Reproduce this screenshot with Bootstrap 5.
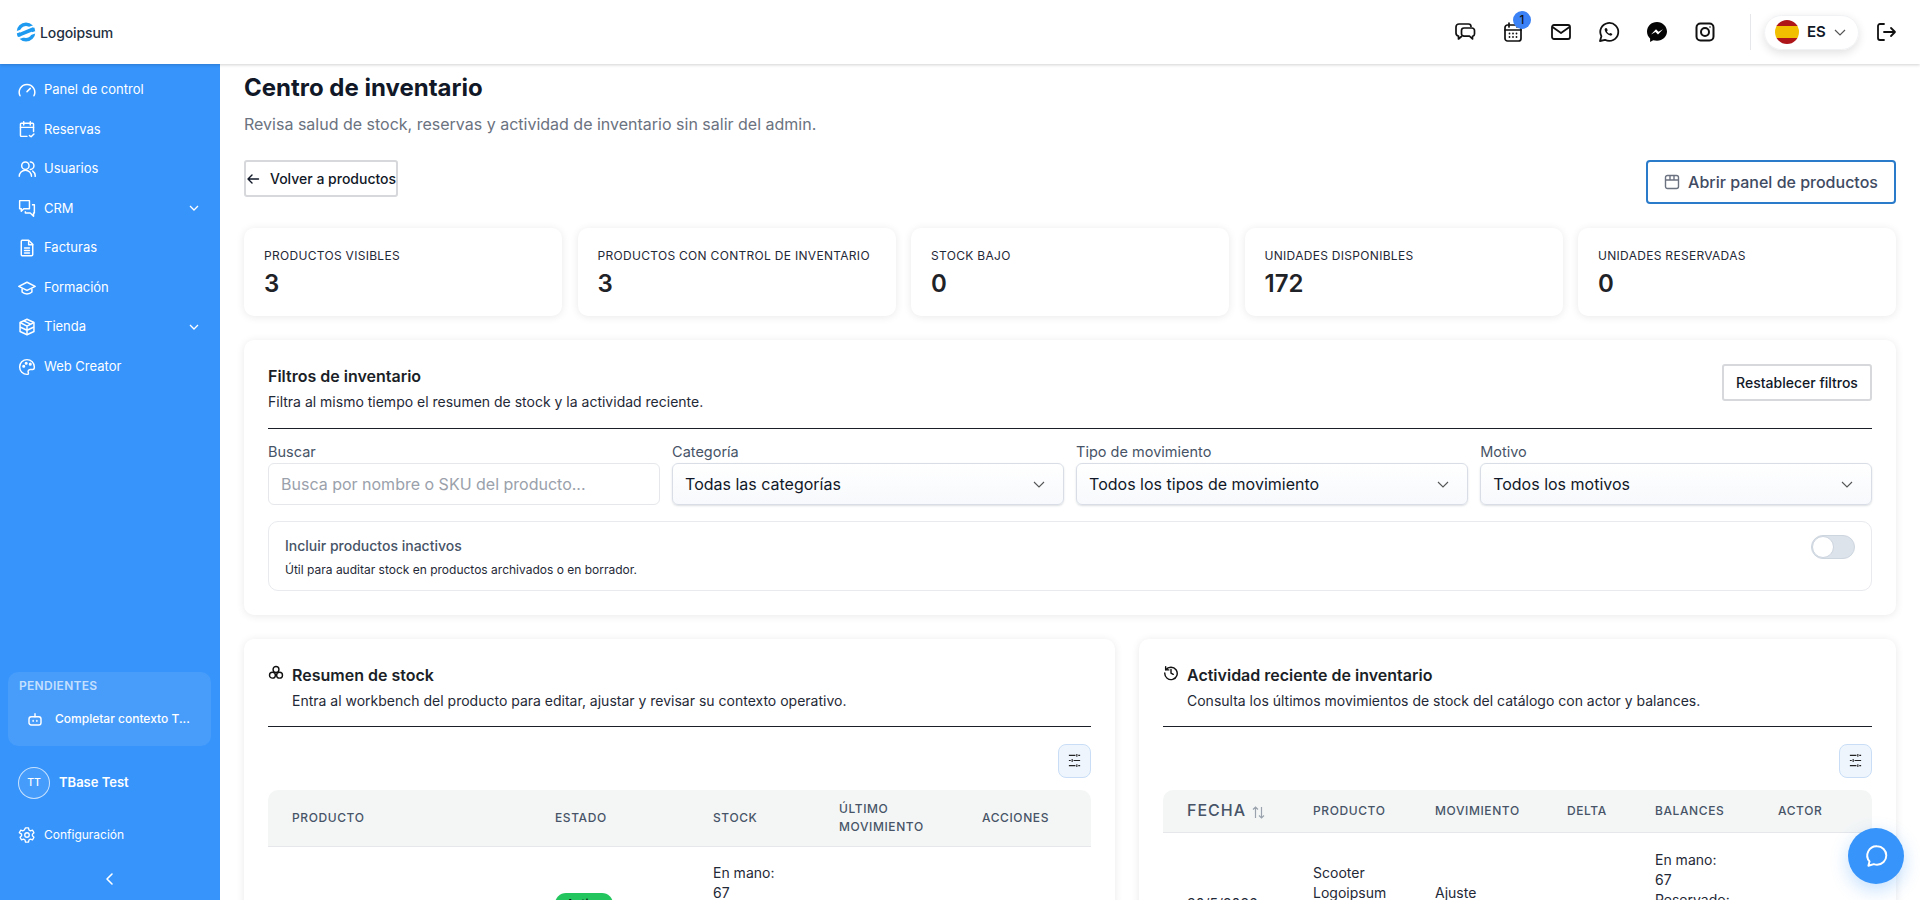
<!DOCTYPE html>
<html lang="es">
<head>
<meta charset="utf-8">
<title>Centro de inventario</title>
<link rel="stylesheet" href="https://cdn.jsdelivr.net/npm/bootstrap@5.3.0/dist/css/bootstrap.min.css">
<style>
html,body{height:100%;overflow:hidden}
body{font-family:Inter,"Liberation Sans",sans-serif;background:#fff;color:#111827}
.app-top{height:64px;background:#fff;box-shadow:0 1px 3px rgba(0,0,0,.18);position:relative;z-index:3;padding:0 22px 0 16px}
.logo-word{font-size:14px;font-weight:500;color:#1f2f3f;letter-spacing:-.1px}
.top-ico{width:24px;height:24px;color:#111;flex:none}
.top-gap{gap:24px}
.cal-badge{position:absolute;top:-9px;left:12px;width:18px;height:18px;border-radius:50%;background:#3b82f6;color:#111;font-size:11.5px;line-height:18px;text-align:center;font-weight:500}
.top-sep{width:1px;height:36px;background:#e5e7eb;margin:0 13px 0 33px}
.lang-pill{height:35px;width:95px;border-radius:18px;box-shadow:0 3px 10px rgba(0,0,0,.12);border:1px solid #f1f2f4;padding:0 12px 0 10px;gap:8px;font-size:15px;font-weight:600}
.flag-dot{width:24px;height:24px;border-radius:50%;background:linear-gradient(#ad1519 0 25%,#f1bf00 25% 75%,#ad1519 75%);flex:none}
.logout-ico{margin-left:15px}
.app-body{height:836px}
.side{width:220px;background:#3694fb;color:#fff;flex:none}
.side-link{height:39.57px;padding:0 20px 0 18px;font-size:13px;gap:8px;color:#fff}
.side-link svg.mi{width:18px;height:18px;flex:none}
.side-nav{padding-top:6px}
.pend-box{margin:0 9px 0 8px;background:rgba(255,255,255,.09);border-radius:10px;height:74px;padding:5px 11px}
.pend-title{font-size:12px;font-weight:600;color:rgba(255,255,255,.7);letter-spacing:.3px}
.pend-item{font-size:12px;font-weight:500;gap:11px;padding:15px 0 0 7px;line-height:18px}
.user-row{padding:0 18px;gap:9px;font-size:13px;font-weight:600;margin-top:21px}
.user-av{width:32px;height:32px;border-radius:50%;border:1px solid rgba(255,255,255,.7);font-size:10.5px;font-weight:500;line-height:30px;text-align:center;background:rgba(255,255,255,.08)}
.cfg-row{padding:0 18px;gap:8px;font-size:12px;margin-top:27px;height:18px}
.side-foot{margin-top:28px;padding-bottom:14px}
.side-foot svg{display:block;margin:0 auto}
.main-pane{flex:1;min-width:0;padding:0 24px;overflow:hidden}
.page-h{font-size:24px;font-weight:700;color:#111827;line-height:32px;margin:8px 0 0}
.page-sub{font-size:16px;color:#6b7280;line-height:24px;margin:8px 0 0}
.act-row{margin-top:24px;height:44px}
.back-btn{height:37px;width:154px;border:2px solid #d6d8db;border-radius:3px;background:#fff;font-size:14px;font-weight:500;color:#111827;padding:0;gap:10px;white-space:nowrap}
.back-btn svg{flex:none}
.open-btn{height:44px;width:250px;border:2px solid #2b7bcb;border-radius:4px;background:#fff;font-size:16px;font-weight:500;color:#3f4b63;gap:8px;padding:0}
.stat-row{display:grid;grid-template-columns:repeat(5,1fr);gap:15.5px;margin-top:24px}
.stat-box{height:88px;background:#fff;border-radius:10px;box-shadow:0 1px 8px rgba(0,0,0,.09);padding:20px}
.stat-lbl{font-size:12px;letter-spacing:.3px;color:#1f2937;line-height:16px}
.stat-num{font-size:24px;font-weight:600;color:#1f2328;line-height:30px;margin-top:5px}
.panel-box{background:#fff;border-radius:10px;box-shadow:0 1px 8px rgba(0,0,0,.09);padding:24px}
.filter-box{height:275px;margin-top:24px}
.filter-head{height:44px}
.panel-h{font-size:16px;font-weight:600;color:#1b1f27;line-height:24px}
.panel-sub{font-size:14px;color:#1f2937;line-height:20px;margin-top:4px}
.rule{height:1px;background:#1b1f27}
.rule-f{margin-top:20px}
.rule-l{margin-top:15px}
.reset-btn{height:37px;width:150px;border:2px solid #d6d8db;border-radius:3px;background:#fff;font-size:14px;font-weight:500;color:#111827;padding:0}
.filter-grid{display:grid;grid-template-columns:repeat(4,1fr);gap:12.2px;margin-top:14px}
.f-lbl{font-size:14.5px;color:#475467;line-height:18px;margin-bottom:2px}
.f-in{height:42px;border:1px solid #dfe3e8;border-radius:6px;padding:0 12px;font-size:16px;color:#111827;display:flex;align-items:center;justify-content:space-between;background:#fff}
.f-in svg{margin-right:6px;flex:none}
.f-in.ph{color:#9aa1ab;border-color:#e5e7eb}
.f-in.sel{background:linear-gradient(#fff,#f7f9fc);box-shadow:0 1px 2px rgba(60,70,90,.18);border-color:#d9dee6}
.tog-box{height:70px;margin-top:16px;border:1px solid #e8eaee;border-radius:10px;padding:13px 16px 0 16px}
.tog-t{font-size:14px;font-weight:500;color:#475467;line-height:20px;margin-top:1px}
.tog-s{font-size:12px;color:#1f2937;line-height:18px;margin-top:5px}
.tog-sw{width:44px;height:24px;border-radius:12px;background:#dde3ea;border:1px solid #cdd5df;position:relative}
.tog-sw::before{content:"";position:absolute;left:0;top:0;width:22px;height:22px;border-radius:50%;background:#fff;border:1px solid #cdd5df}
.lower-grid{display:grid;grid-template-columns:871px 757px;gap:24px;margin-top:24px}
.lower-box{height:320px;overflow:hidden}
.head-ico{width:16px;height:16px;flex:none;margin-top:2px}
.tune-row{margin-top:16.5px}
.tune-btn{width:33px;height:34px;border-radius:8px;background:#eef5fd;border:1px solid #c9def6;padding:0;display:flex;align-items:center;justify-content:center}
.tb-wrap{margin-top:12px}
.inv-t{width:100%;table-layout:fixed;border-collapse:separate;border-spacing:0}
.inv-t th{background:#f4f6f6;font-size:12px;font-weight:500;letter-spacing:.6px;color:#475467;text-transform:uppercase;border-bottom:1px solid #e5e7eb;padding:0 0 0 24px;line-height:18px;vertical-align:middle}
.inv-t th:first-child{border-top-left-radius:10px}
.inv-t th:last-child{border-top-right-radius:10px}
.inv-t td{font-size:14px;line-height:20px;color:#1f2937;vertical-align:top;padding:16px 0 0 24px}
.inv-stock col:nth-child(1){width:263px}
.inv-stock col:nth-child(2){width:158px}
.inv-stock col:nth-child(3){width:126px}
.inv-stock col:nth-child(4){width:143px}
.inv-stock thead tr{height:57px}
.inv-act col:nth-child(1){width:126px}
.inv-act col:nth-child(2){width:122px}
.inv-act col:nth-child(3){width:132px}
.inv-act col:nth-child(4){width:88px}
.inv-act col:nth-child(5){width:123px}
.inv-act thead tr{height:43px}
.inv-t th.th-fecha{font-size:16px;letter-spacing:1px}
.inv-t td.td-tag{padding-top:46px}
.inv-t td.td-date{padding-top:61px}
.inv-t td.td-prod{padding-top:30px}
.inv-t td.td-mov{padding-top:50px}
.inv-t td.td-bal{padding-top:17px}
.fab-chat{position:absolute;right:16px;bottom:16px;width:56px;height:56px;border-radius:50%;background:#3694fb;box-shadow:0 6px 18px rgba(54,148,251,.3);z-index:5}
.act-tag{display:inline-block;background:#22c55e;color:#111;font-size:12px;font-weight:500;border-radius:11px;padding:1px 11px;line-height:20px}
</style>
</head>
<body>
<header class="app-top d-flex align-items-center">
  <div class="d-flex align-items-center gap-1">
    <svg width="20" height="20" viewBox="0 0 20 20"><circle cx="10" cy="10" r="7.700" fill="none" stroke="#1e9bf0" stroke-width="3.400"/><path d="M0 10.500L20 3.500M0 17L20 10" stroke="#fff" stroke-width="2.200"/><path d="M2.500 13.200L17.500 7" stroke="#1e9bf0" stroke-width="3.600"/></svg>
    <span class="logo-word">Logoipsum</span>
  </div>
  <div class="ms-auto d-flex align-items-center top-gap">
    <svg class="top-ico" viewBox="0 0 24 24" fill="none" stroke="currentColor" stroke-width="1.700" stroke-linejoin="round"><path d="M18 7V6.500A2.500 2.500 0 0 0 15.500 4H6a3 3 0 0 0-3 3v6a3 3 0 0 0 2.500 3v3l3.500-3"/><path d="M11 8h8a2.500 2.500 0 0 1 2.500 2.500v3.500a2.500 2.500 0 0 1-2 2.400V19l-3-2.800H11A2.500 2.500 0 0 1 8.500 13.700v-3.200A2.500 2.500 0 0 1 11 8z"/></svg>
    <span class="position-relative d-block top-ico">
      <svg class="top-ico d-block" viewBox="0 0 24 24" fill="none" stroke="currentColor" stroke-width="1.700" stroke-linecap="round"><rect x="4" y="5" width="16" height="16" rx="2.500"/><path d="M8 3v4M16 3v4M4 10h16"/><path d="M8.500 13.500h.01M12 13.500h.01M15.500 13.500h.01M8.500 17h.01M12 17h.01M15.500 17h.01" stroke-width="1.800"/></svg>
      <span class="cal-badge">1</span>
    </span>
    <svg class="top-ico" viewBox="0 0 24 24" fill="none" stroke="currentColor" stroke-width="1.800" stroke-linejoin="round"><rect x="3" y="5" width="18" height="14" rx="2"/><path d="M3.500 7l8.500 6 8.500-6"/></svg>
    <svg class="top-ico" viewBox="0 0 24 24" fill="none" stroke="currentColor" stroke-width="1.800" stroke-linejoin="round"><path d="M3 21l1.400-4.800A9 9 0 1 1 8 19.800z"/><path d="M9 8c-1 0-1.500 1-1.300 2 .6 2.700 3 5 5.500 5.600 1 .2 2.100-.4 2.100-1.400 0-.5-1.700-1.400-2.200-1.200l-.9.700c-1-.5-1.800-1.300-2.300-2.300l.7-.9C10.800 10 10 8 9 8z" fill="currentColor" stroke="none"/></svg>
    <svg class="top-ico" viewBox="0 0 24 24"><path d="M12 2C6.300 2 2 6.200 2 11.600c0 2.900 1.200 5.300 3.100 7V22l3.100-1.700c1.200.3 2.500.5 3.800.5 5.700 0 10-4.200 10-9.200S17.700 2 12 2z" fill="#050505"/><path d="M6 14.500l5-5.300 2.500 2.600L18 9.200l-5 5.300-2.500-2.600z" fill="#fff"/></svg>
    <svg class="top-ico" viewBox="0 0 24 24" fill="none" stroke="currentColor" stroke-width="2"><rect x="3.500" y="3.500" width="17" height="17" rx="4"/><circle cx="12" cy="12" r="4"/><circle cx="17" cy="7" r=".8" fill="currentColor" stroke="none"/></svg>
  </div>
  <span class="top-sep"></span>
  <div class="lang-pill d-flex align-items-center">
    <span class="flag-dot"></span><span>ES</span>
    <svg class="ms-auto" width="12" height="12" viewBox="0 0 12 12" fill="none" stroke="#555" stroke-width="1.200"><path d="M1 4l5 5 5-5"/></svg>
  </div>
  <svg class="top-ico logout-ico" viewBox="0 0 24 24" fill="none" stroke="currentColor" stroke-width="1.800" stroke-linecap="round" stroke-linejoin="round"><path d="M10 4H6a2 2 0 0 0-2 2v12a2 2 0 0 0 2 2h4M10 12h11M17 8l4 4-4 4"/></svg>
</header>
<div class="app-body d-flex">
  <aside class="side d-flex flex-column">
    <nav class="side-nav">
      <div class="side-link d-flex align-items-center"><svg class="mi" viewBox="1 1 22 22" fill="none" stroke="#fff" stroke-width="1.800" stroke-linecap="round"><path d="M3.500 19a9.500 9.500 0 1 1 17 0"/><path d="M12 14l4-4"/></svg>Panel de control</div>
      <div class="side-link d-flex align-items-center"><svg class="mi" viewBox="1 1 22 22" fill="none" stroke="#fff" stroke-width="1.800" stroke-linecap="round" stroke-linejoin="round"><path d="M12 21H5a1 1 0 0 1-1-1V6a1 1 0 0 1 1-1h14a1 1 0 0 1 1 1v9"/><path d="M4 10h16M8 3v4M16 3v4M15 20l2 1.500 3.500-3.500"/></svg>Reservas</div>
      <div class="side-link d-flex align-items-center"><svg class="mi" viewBox="1 1 22 22" fill="none" stroke="#fff" stroke-width="1.800" stroke-linecap="round"><circle cx="10" cy="8" r="4.500"/><path d="M2.500 21a7.500 7.500 0 0 1 15 0M16 3.500a4.500 4.500 0 0 1 0 9M19 14.500a7 7 0 0 1 3 6.500"/></svg>Usuarios</div>
      <div class="side-link d-flex align-items-center"><svg class="mi" viewBox="1 1 22 22" fill="none" stroke="#fff" stroke-width="1.800" stroke-linejoin="round"><path d="M3 3h12v10H8l-3 3v-3H3z"/><path d="M18 8h3v10h-1v4l-4-4H10v-2"/></svg>CRM<svg class="ms-auto" width="12" height="12" viewBox="0 0 12 12" fill="none" stroke="#fff" stroke-width="1.300"><path d="M2 4l4 4 4-4"/></svg></div>
      <div class="side-link d-flex align-items-center"><svg class="mi" viewBox="1 1 22 22" fill="none" stroke="#fff" stroke-width="1.800" stroke-linejoin="round" stroke-linecap="round"><path d="M6 2.500h8l5 5V20a1.500 1.500 0 0 1-1.500 1.500h-11.500A1.500 1.500 0 0 1 5 20V4A1.500 1.500 0 0 1 6 2.500z"/><path d="M14 3v5h5M9 12h6M9 15h6M9 18h6"/></svg>Facturas</div>
      <div class="side-link d-flex align-items-center"><svg class="mi" viewBox="1 1 22 22" fill="none" stroke="#fff" stroke-width="1.800" stroke-linejoin="round"><path d="M12 5L2 10l10 5 10-5z"/><path d="M6 12.500V17c3 3 9 3 12 0v-4.500"/></svg>Formación</div>
      <div class="side-link d-flex align-items-center"><svg class="mi" viewBox="1 1 22 22" fill="none" stroke="#fff" stroke-width="1.800" stroke-linejoin="round"><path d="M12 2.500l8.500 4v11L12 21.500 3.500 17.500v-11z"/><path d="M3.500 6.500L12 11l8.500-4.500M12 11v10.500M3.500 12l8.500 4 8.500-4M8 4.500l8.500 4"/></svg>Tienda<svg class="ms-auto" width="12" height="12" viewBox="0 0 12 12" fill="none" stroke="#fff" stroke-width="1.300"><path d="M2 4l4 4 4-4"/></svg></div>
      <div class="side-link d-flex align-items-center"><svg class="mi" viewBox="1 1 22 22" fill="none" stroke="#fff" stroke-width="1.800"><path d="M12 3a9 9 0 1 0 0 18c2 0 2-1.500 1.500-2.500S13.500 15 16 15h3c1.500 0 2-1.500 2-3a9 9 0 0 0-9-9z"/><circle cx="8" cy="11" r="1" fill="#fff"/><circle cx="11" cy="7.500" r="1" fill="#fff"/><circle cx="16" cy="8.500" r="1" fill="#fff"/></svg>Web Creator</div>
    </nav>
    <div class="mt-auto">
      <div class="pend-box">
        <div class="pend-title">PENDIENTES</div>
        <div class="pend-item d-flex align-items-center"><svg width="18" height="18" viewBox="0 0 24 24" fill="none" stroke="#fff" stroke-width="1.900" stroke-linecap="round"><rect x="4" y="9" width="16" height="11" rx="3"/><path d="M12 5v4M9.500 14v1M14.500 14v1"/></svg><span class="text-truncate">Completar contexto T...</span></div>
      </div>
      <div class="user-row d-flex align-items-center"><span class="user-av">TT</span><span>TBase Test</span></div>
      <div class="cfg-row d-flex align-items-center"><svg width="18" height="18" viewBox="0 0 24 24" fill="none" stroke="#fff" stroke-width="1.800" stroke-linejoin="round"><circle cx="12" cy="12" r="3"/><path d="M10 2.500h4l.6 2.800 2 1.100 2.700-.9 2 3.500-2.100 1.900v2.200l2.100 1.900-2 3.500-2.700-.9-2 1.100-.6 2.800h-4l-.6-2.800-2-1.100-2.700.9-2-3.500 2.100-1.900v-2.200L1.700 9l2-3.500 2.700.9 2-1.100z"/></svg>Configuración</div>
      <div class="side-foot"><svg width="14" height="14" viewBox="0 0 14 14" fill="none" stroke="#fff" stroke-width="1.600" stroke-linecap="round" stroke-linejoin="round"><path d="M9 2L4 7l5 5"/></svg></div>
    </div>
  </aside>
  <main class="main-pane">
    <h1 class="page-h">Centro de inventario</h1>
    <p class="page-sub">Revisa salud de stock, reservas y actividad de inventario sin salir del admin.</p>
    <div class="act-row d-flex justify-content-between align-items-start">
      <button class="back-btn d-flex align-items-center" type="button"><svg width="14" height="14" viewBox="0 0 14 14" fill="none" stroke="#111827" stroke-width="1.400" stroke-linecap="round" stroke-linejoin="round"><path d="M12.500 7H2M6 3L2 7l4 4"/></svg>Volver a productos</button>
      <button class="open-btn d-flex align-items-center justify-content-center" type="button"><svg width="16" height="16" viewBox="0 0 16 16" fill="none" stroke="#6b7280" stroke-width="1.400" stroke-linejoin="round"><rect x="1.500" y="1.500" width="13" height="13" rx="2"/><path d="M1.500 6h13M6 1.500V6M10 1.500V6"/></svg>Abrir panel de productos</button>
    </div>
    <div class="stat-row">
      <div class="stat-box"><div class="stat-lbl">PRODUCTOS VISIBLES</div><div class="stat-num">3</div></div>
      <div class="stat-box"><div class="stat-lbl">PRODUCTOS CON CONTROL DE INVENTARIO</div><div class="stat-num">3</div></div>
      <div class="stat-box"><div class="stat-lbl">STOCK BAJO</div><div class="stat-num">0</div></div>
      <div class="stat-box"><div class="stat-lbl">UNIDADES DISPONIBLES</div><div class="stat-num">172</div></div>
      <div class="stat-box"><div class="stat-lbl">UNIDADES RESERVADAS</div><div class="stat-num">0</div></div>
    </div>
    <section class="panel-box filter-box">
      <div class="filter-head d-flex justify-content-between align-items-start">
        <div><div class="panel-h">Filtros de inventario</div><div class="panel-sub">Filtra al mismo tiempo el resumen de stock y la actividad reciente.</div></div>
        <button class="reset-btn" type="button">Restablecer filtros</button>
      </div>
      <div class="rule rule-f"></div>
      <div class="filter-grid">
        <div><div class="f-lbl">Buscar</div><div class="f-in ph">Busca por nombre o SKU del producto...</div></div>
        <div><div class="f-lbl">Categoría</div><div class="f-in sel">Todas las categorías<svg width="12" height="12" viewBox="0 0 12 12" fill="none" stroke="#555" stroke-width="1.100"><path d="M1 4l5 5 5-5"/></svg></div></div>
        <div><div class="f-lbl">Tipo de movimiento</div><div class="f-in sel">Todos los tipos de movimiento<svg width="12" height="12" viewBox="0 0 12 12" fill="none" stroke="#555" stroke-width="1.100"><path d="M1 4l5 5 5-5"/></svg></div></div>
        <div><div class="f-lbl">Motivo</div><div class="f-in sel">Todos los motivos<svg width="12" height="12" viewBox="0 0 12 12" fill="none" stroke="#555" stroke-width="1.100"><path d="M1 4l5 5 5-5"/></svg></div></div>
      </div>
      <div class="tog-box d-flex justify-content-between align-items-start">
        <div><div class="tog-t">Incluir productos inactivos</div><div class="tog-s">Útil para auditar stock en productos archivados o en borrador.</div></div>
        <span class="tog-sw"></span>
      </div>
    </section>
    <div class="lower-grid">
      <section class="panel-box lower-box">
        <div class="d-flex gap-2"><svg class="head-ico" viewBox="0 0 18 18" fill="none" stroke="#111" stroke-width="1.600"><circle cx="9" cy="5" r="3.300"/><circle cx="5" cy="11.500" r="3.300"/><circle cx="13" cy="11.500" r="3.300"/></svg><div><div class="panel-h">Resumen de stock</div><div class="panel-sub">Entra al workbench del producto para editar, ajustar y revisar su contexto operativo.</div></div></div>
        <div class="rule rule-l"></div>
        <div class="d-flex justify-content-end tune-row"><button class="tune-btn" type="button" aria-label="Columnas"><svg width="15" height="15" viewBox="0 0 16 16" fill="none" stroke="#222" stroke-width="1.200"><path d="M2 2.500h7M12 2.500h2M10.500 1v3M2 8h2M7 8h7M5.500 6.500v3M2 13.500h7M12 13.500h2M10.500 12v3"/></svg></button></div>
        <div class="tb-wrap">
          <table class="inv-t inv-stock">
            <colgroup><col><col><col><col><col></colgroup>
            <thead><tr><th>Producto</th><th>Estado</th><th>Stock</th><th>Último movimiento</th><th>Acciones</th></tr></thead>
            <tbody><tr><td></td><td class="td-tag"><span class="act-tag">Activo</span></td><td>En mano:<br>67</td><td></td><td></td></tr></tbody>
          </table>
        </div>
      </section>
      <section class="panel-box lower-box">
        <div class="d-flex gap-2"><svg class="head-ico" viewBox="0 0 18 18" fill="none" stroke="#111" stroke-width="1.600" stroke-linecap="round"><path d="M3 2v3.500h3.500M3.200 5.500A7 7 0 1 1 2 9M9 5V9l2.500 1.500"/></svg><div><div class="panel-h">Actividad reciente de inventario</div><div class="panel-sub">Consulta los últimos movimientos de stock del catálogo con actor y balances.</div></div></div>
        <div class="rule rule-l"></div>
        <div class="d-flex justify-content-end tune-row"><button class="tune-btn" type="button" aria-label="Columnas"><svg width="15" height="15" viewBox="0 0 16 16" fill="none" stroke="#222" stroke-width="1.200"><path d="M2 2.500h7M12 2.500h2M10.500 1v3M2 8h2M7 8h7M5.500 6.500v3M2 13.500h7M12 13.500h2M10.500 12v3"/></svg></button></div>
        <div class="tb-wrap">
          <table class="inv-t inv-act">
            <colgroup><col><col><col><col><col><col></colgroup>
            <thead><tr><th class="th-fecha">Fecha <svg width="15" height="15" viewBox="0 0 15 15" fill="none" stroke="#9aa3ad" stroke-width="1.200"><path d="M4.500 13V2M2 4.500l2.500-2.500 2.500 2.500M10.500 2v11M8 10.500l2.500 2.500 2.500-2.500"/></svg></th><th>Producto</th><th>Movimiento</th><th>Delta</th><th>Balances</th><th>Actor</th></tr></thead>
            <tbody><tr><td class="td-date">30/5/2026</td><td class="td-prod">Scooter<br>Logoipsum</td><td class="td-mov">Ajuste</td><td></td><td class="td-bal">En mano:<br>67<br>Reservado:</td><td></td></tr></tbody>
          </table>
        </div>
      </section>
    </div>
  </main>
</div>
<div class="fab-chat d-flex align-items-center justify-content-center"><svg width="26" height="26" viewBox="0 0 24 24" fill="none" stroke="#fff" stroke-width="1.800" stroke-linejoin="round"><path d="M13 3a8.500 8.500 0 0 1 0 17c-1 0-2-.2-3-.5L5 21l1-4A8.500 8.500 0 0 1 13 3z"/></svg></div>
<script src="https://cdn.jsdelivr.net/npm/bootstrap@5.3.0/dist/js/bootstrap.bundle.min.js"></script>
</body>
</html>
